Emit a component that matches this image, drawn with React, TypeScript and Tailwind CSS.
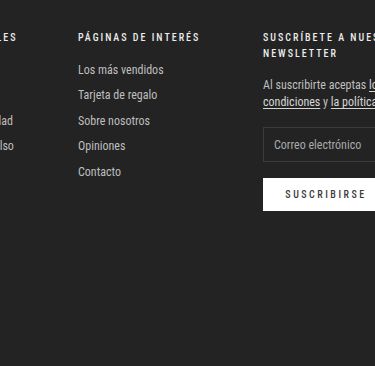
import React from "react";

function Heading({ children }: { children: React.ReactNode }) {
  return (
    <h3 className="text-[10px] font-medium leading-[16px] tracking-[0.2em] text-[#ececec] uppercase">
      {children}
    </h3>
  );
}

function LinkList({ items }: { items: string[] }) {
  return (
    <ul className="mt-[16px] flex flex-col gap-[8px]">
      {items.map((t) => (
        <li key={t} className="text-[12px] leading-[17.4px] text-[#bfbfbf]">
          {t}
        </li>
      ))}
    </ul>
  );
}

export default function App() {
  return (
    <div className="w-[375px] h-[366px] overflow-hidden bg-[#232323] font-['Roboto_Condensed',sans-serif]">
      <div className="ml-[-89px] flex gap-[30px] pt-[30px]">
        <div className="w-[137px] shrink-0">
          <Heading>Enlaces legales</Heading>
          <LinkList
            items={["Buscar", "Política de envíos.", "Política de privacidad", "Política de reembolso"]}
          />
        </div>
        <div className="w-[155px] shrink-0">
          <Heading>Páginas de interés</Heading>
          <LinkList
            items={["Los más vendidos", "Tarjeta de regalo", "Sobre nosotros", "Opiniones", "Contacto"]}
          />
        </div>
        <div className="w-[200px] shrink-0">
          <Heading>Suscríbete a nuestra newsletter</Heading>
          <p className="mt-[15px] text-[12px] leading-[17px] text-[#bfbfbf]">
            Al suscribirte aceptas{" "}
            <span className="underline underline-offset-2 text-[#d6d6d6]">los términos y condiciones</span> y{" "}
            <span className="underline underline-offset-2 text-[#d6d6d6]">la política de privacidad</span>.
          </p>
          <div className="mt-[16px] h-[35px] border border-[#3b3b3b] flex items-center px-[10px] text-[12px] text-[#a9a9a9]">
            Correo electrónico
          </div>
          <button className="mt-[16px] h-[33px] w-[126px] bg-white text-[#3a3a3a] text-[10px] font-medium tracking-[0.25em]">
            SUSCRIBIRSE
          </button>
        </div>
      </div>
    </div>
  );
}
